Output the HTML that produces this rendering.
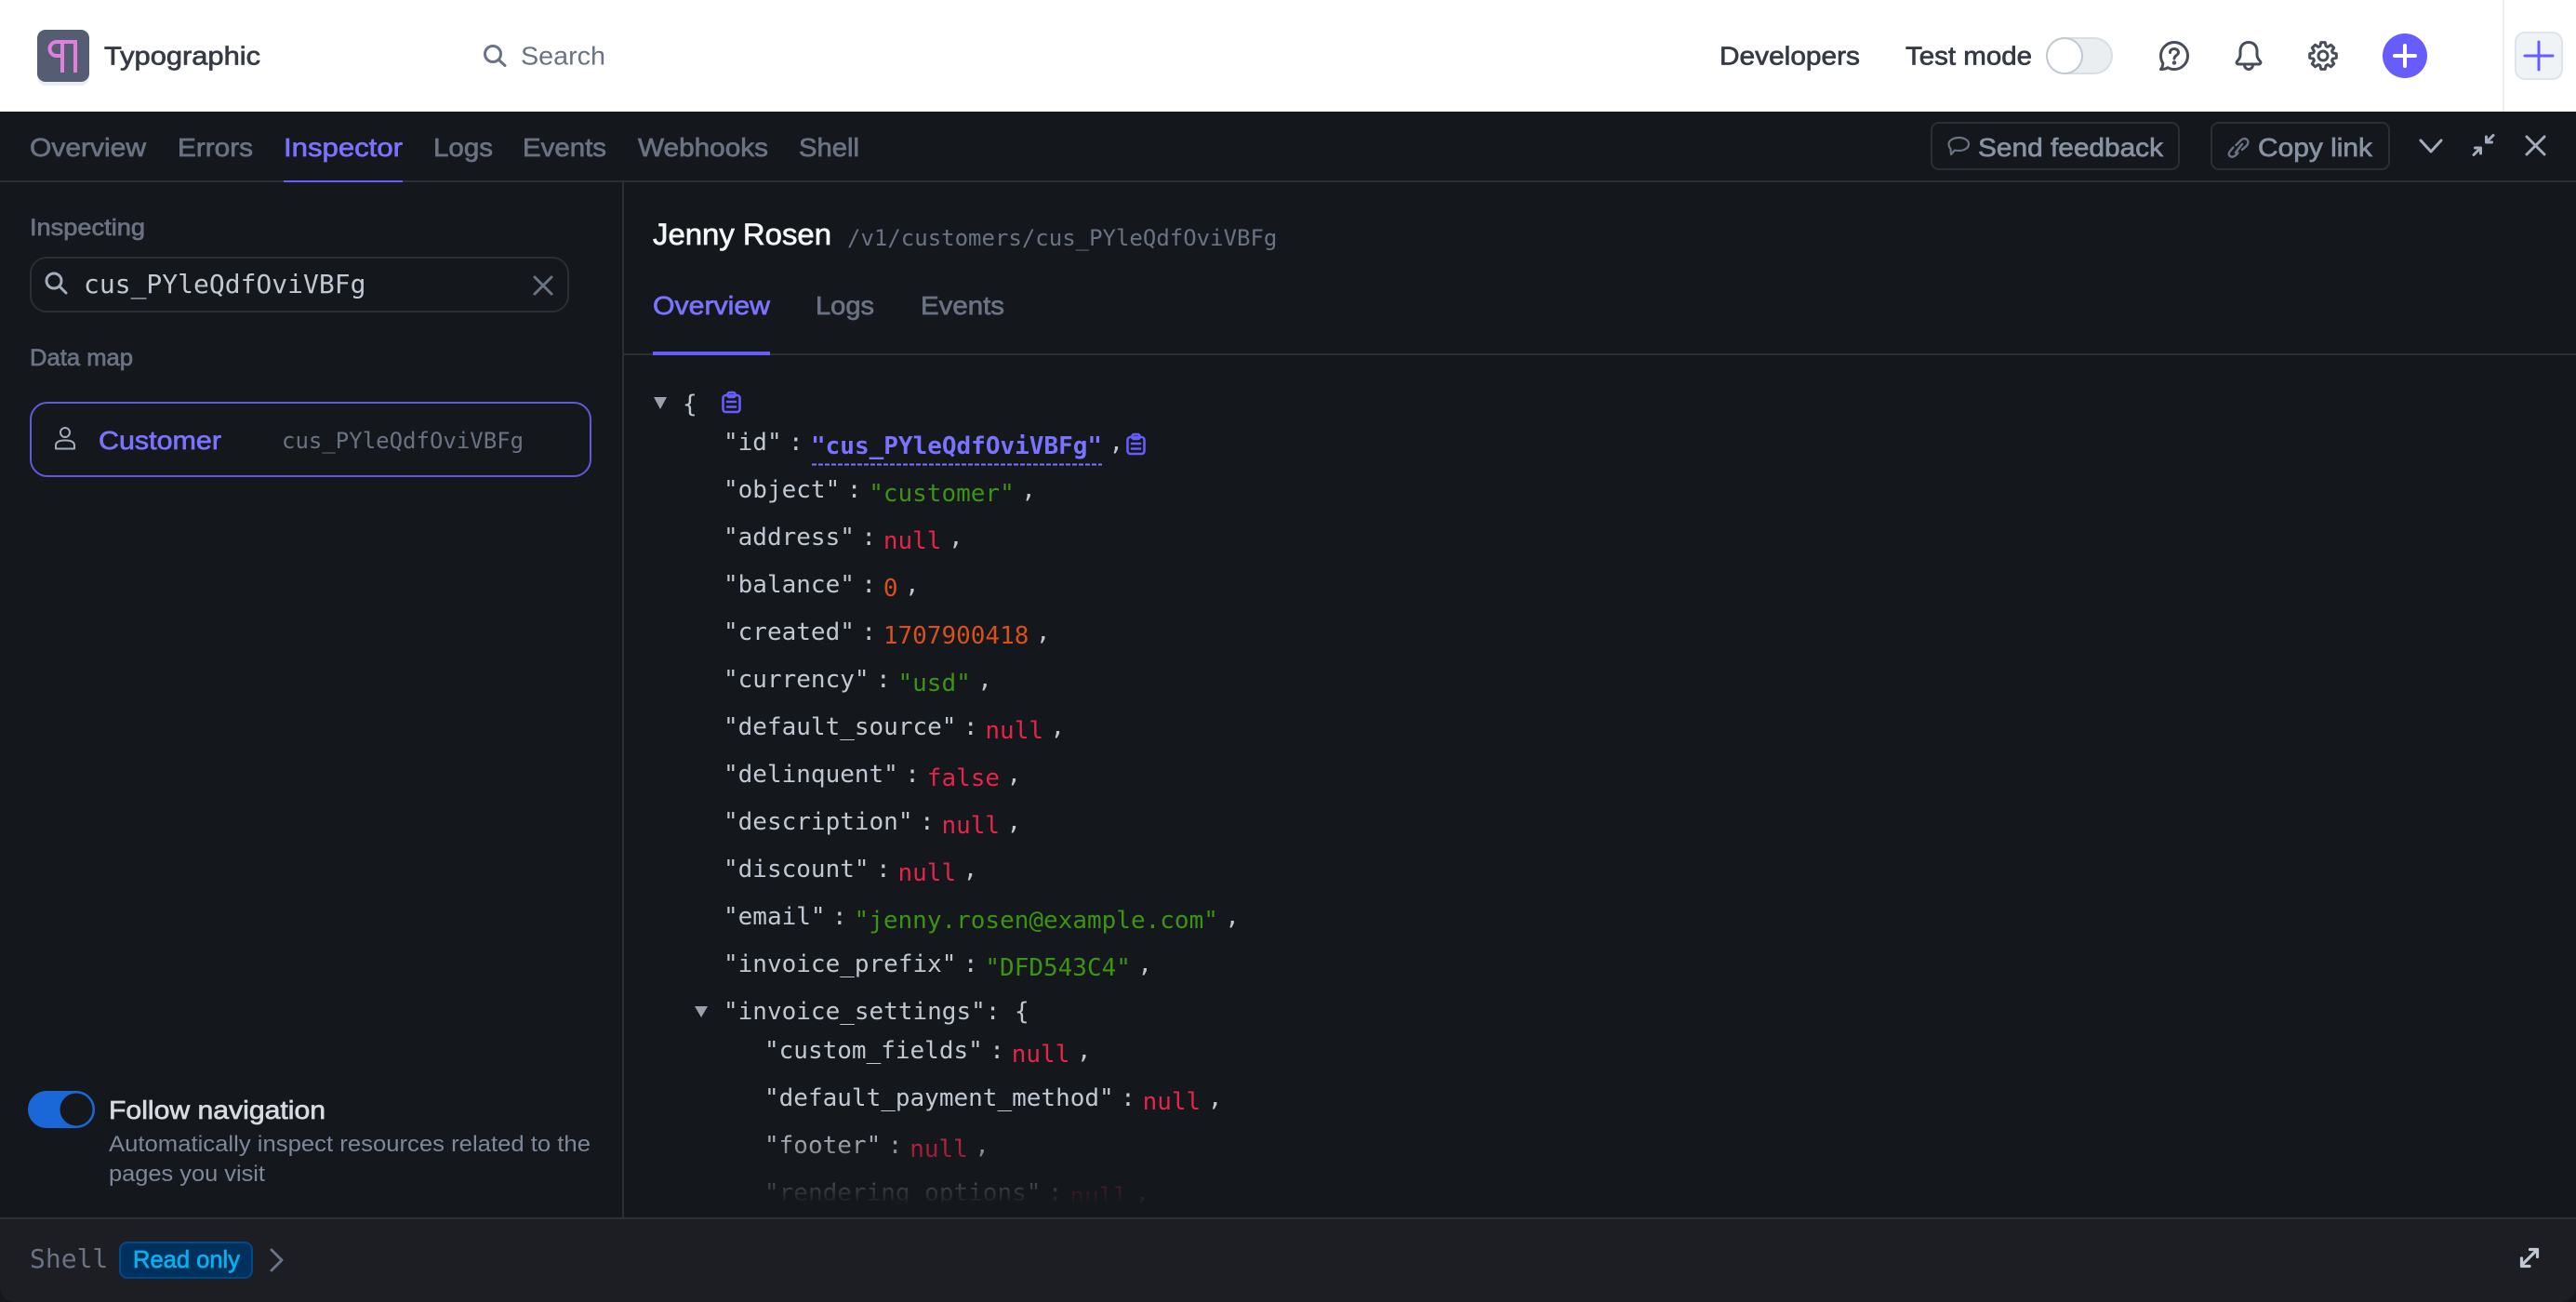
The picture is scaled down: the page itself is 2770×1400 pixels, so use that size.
<!DOCTYPE html>
<html lang="en"><head><meta charset="utf-8"><title>Typographic</title>
<style>
html,body{margin:0;padding:0;background:#14171c;width:2770px;height:1400px;overflow:hidden}
svg{display:block}
text{white-space:pre}
.s{font-family:"Liberation Sans",sans-serif;font-size:28px}
.m{stroke-width:.7px}
.c{font-family:"DejaVu Sans Mono","Liberation Mono",monospace;font-size:26px}
.k{fill:#c0c8d2}.g{fill:#3d9414}.r{fill:#e5244a}.o{fill:#d9501a}
.i{fill:none;stroke-linecap:round;stroke-linejoin:round}
</style></head><body>
<svg xmlns="http://www.w3.org/2000/svg" width="2770" height="1400" viewBox="0 0 2770 1400">
<defs><linearGradient id="fade" gradientUnits="userSpaceOnUse" x1="0" y1="1210" x2="0" y2="1296"><stop offset="0" stop-color="#14171c" stop-opacity="0"/><stop offset="1" stop-color="#14171c"/></linearGradient></defs>

<!-- top header -->
<rect x="0" y="0" width="2770" height="120" fill="#fff"/>
<rect x="40" y="36" width="56" height="56" rx="9" fill="#ebeef1"/>
<rect x="40" y="32" width="56" height="56" rx="9" fill="#545d72"/>
<path d="M67 78V45H81V78M67 45H61A7.5 7.5 0 0 0 61 60H67" fill="none" stroke="#e07fdc" stroke-width="4"/>
<text class="s m" x="112" y="69.5" textLength="168" lengthAdjust="spacingAndGlyphs" fill="#353a44" stroke="#353a44">Typographic</text>
<circle cx="530" cy="58" r="8.5" class="i" stroke="#6a7383" stroke-width="3"/><path d="M536.5 64.5L543 70.5" class="i" stroke="#6a7383" stroke-width="3"/>
<text class="s" x="560" y="69.5" textLength="91" lengthAdjust="spacingAndGlyphs" fill="#6a7383">Search</text>
<text class="s m" x="1849" y="69.5" textLength="151" lengthAdjust="spacingAndGlyphs" fill="#353a44" stroke="#353a44">Developers</text>
<text class="s m" x="2049" y="69.5" textLength="136" lengthAdjust="spacingAndGlyphs" fill="#353a44" stroke="#353a44">Test mode</text>
<rect x="2201" y="41" width="70" height="38" rx="19" fill="#ebeef1" stroke="#d8dee4" stroke-width="2"/>
<circle cx="2220" cy="60" r="19" fill="#fff" stroke="#c0c8d2" stroke-width="2"/>
<g transform="translate(2322 44)" class="i" stroke="#474e5a" stroke-width="3">
<path d="M16 1.5C24 1.5 30.5 8 30.5 16S24 30.5 16 30.5C13.5 30.5 11 29.8 9 28.6C7 30 4.5 30.5 1.5 30.5C3 28.5 3.8 26.5 3.8 24C2.3 21.7 1.5 19 1.5 16C1.5 8 8 1.5 16 1.5Z"/>
<path d="M11.5 12.5C11.5 10 13.5 8.5 16 8.5S20.5 10.2 20.5 12.5C20.5 15.5 16 15.5 16 19"/>
<circle cx="16" cy="23.5" r=".8" fill="#474e5a"/></g>
<g transform="translate(2404 44)" class="i" stroke="#474e5a" stroke-width="3">
<path d="M14 1.5C8 1.5 5 6 5 11V15C5 18 3.5 20 1.5 22C0.5 23.5 1.5 25 3 25H25C26.5 25 27.5 23.5 26.5 22C24.5 20 23 18 23 15V11C23 6 20 1.5 14 1.5Z"/>
<path d="M9.5 25.5C9.5 28.5 11.5 30.5 14 30.5S18.5 28.5 18.5 25.5"/></g>
<g transform="translate(2498 60)" class="i" stroke="#474e5a" stroke-width="3">
<polygon points="10.33,-3.16 14.32,-2.27 14.32,2.27 10.33,3.16 9.54,5.07 11.73,8.52 8.52,11.73 5.07,9.54 3.16,10.33 2.27,14.32 -2.27,14.32 -3.16,10.33 -5.07,9.54 -8.52,11.73 -11.73,8.52 -9.54,5.07 -10.33,3.16 -14.32,2.27 -14.32,-2.27 -10.33,-3.16 -9.54,-5.07 -11.73,-8.52 -8.52,-11.73 -5.07,-9.54 -3.16,-10.33 -2.27,-14.32 2.27,-14.32 3.16,-10.33 5.07,-9.54 8.52,-11.73 11.73,-8.52 9.54,-5.07"/>
<circle r="5"/></g>
<circle cx="2586" cy="60" r="24" fill="#675dff"/>
<path d="M2575 60H2597M2586 49V71" class="i" stroke="#fff" stroke-width="4"/>
<rect x="2691" y="0" width="2" height="120" fill="#ebeef1"/>
<rect x="2705" y="35" width="50" height="50" rx="10" fill="#f0f3f6" stroke="#dfe3ea" stroke-width="2"/>
<path d="M2715 60H2745M2730 45V75" class="i" stroke="#675dff" stroke-width="3"/>

<!-- dark panel tabs -->
<rect x="0" y="194" width="2770" height="2" fill="#2a2e37"/>
<rect x="305" y="194" width="128" height="2" fill="#675dff"/>
<g class="s m" fill="#6a7383" stroke="#6a7383">
<text x="32" y="168" textLength="125" lengthAdjust="spacingAndGlyphs">Overview</text>
<text x="191" y="168" textLength="81" lengthAdjust="spacingAndGlyphs">Errors</text>
<text x="466" y="168" textLength="64" lengthAdjust="spacingAndGlyphs">Logs</text>
<text x="562" y="168" textLength="90" lengthAdjust="spacingAndGlyphs">Events</text>
<text x="686" y="168" textLength="140" lengthAdjust="spacingAndGlyphs">Webhooks</text>
<text x="859" y="168" textLength="65" lengthAdjust="spacingAndGlyphs">Shell</text>
</g>
<text class="s m" x="305" y="168" textLength="128" lengthAdjust="spacingAndGlyphs" fill="#7a73ff" stroke="#7a73ff">Inspector</text>
<rect x="2077" y="132" width="266" height="50" rx="8" fill="none" stroke="#2a2e37" stroke-width="2"/>
<rect x="2378" y="132" width="191" height="50" rx="8" fill="none" stroke="#2a2e37" stroke-width="2"/>
<path d="M2106.500 148C2112.500 148 2117 151 2117 155S2112.500 162 2106.500 162C2104.500 162 2103 161.800 2102 161.500L2098 166L2097.500 160C2096 158.500 2095.500 157 2095.500 155C2095.500 151 2100.500 148 2106.500 148Z" class="i" stroke="#6a7383" stroke-width="2.200"/>
<text class="s m" x="2127" y="168" textLength="199" lengthAdjust="spacingAndGlyphs" fill="#8792a2" stroke="#8792a2">Send feedback</text>
<g class="i" stroke="#6a7383" stroke-width="2.400"><path d="M2404.500 156L2410 150.500C2412.500 148.500 2415 148.800 2416.500 150.500C2418 152.500 2417.500 155 2415.500 157L2411 161"/><path d="M2401.500 158.500L2398 162.500C2396.300 164.500 2396.300 166.500 2398 168C2400 169.300 2402 168.800 2404 167L2406.500 164.500"/><path d="M2404 164L2411 155"/></g>
<text class="s m" x="2428" y="168" textLength="123" lengthAdjust="spacingAndGlyphs" fill="#8792a2" stroke="#8792a2">Copy link</text>
<path d="M2603 151L2614 163L2625 151" class="i" stroke="#a3acba" stroke-width="3"/>
<g class="i" stroke="#a3acba" stroke-width="3"><path d="M2660 166.500L2667.500 159M2667.500 165V159H2661.500"/><path d="M2681 145.500L2673.500 153M2673.500 147V153H2679.500"/></g>
<path d="M2717 147L2736 166M2736 147L2717 166" class="i" stroke="#a3acba" stroke-width="3"/>

<!-- sidebar -->
<rect x="669" y="196" width="2" height="1114" fill="#2a2e37"/>
<text class="s m" style="font-size:25px" x="32" y="253" textLength="124" lengthAdjust="spacingAndGlyphs" fill="#6a7383" stroke="#6a7383">Inspecting</text>
<rect x="33" y="277" width="578" height="58" rx="17" fill="none" stroke="#2a2e37" stroke-width="2"/>
<circle cx="58" cy="302" r="8" class="i" stroke="#a3acba" stroke-width="3"/><path d="M64 308L71 315" class="i" stroke="#a3acba" stroke-width="3"/>
<text class="c" style="font-size:28px" x="90" y="315" fill="#c0c8d2">cus_PYleQdfOviVBFg</text>
<path d="M575 298L593 316M593 298L575 316" class="i" stroke="#6a7383" stroke-width="3"/>
<text class="s m" style="font-size:25px" x="32" y="393" textLength="111" lengthAdjust="spacingAndGlyphs" fill="#6a7383" stroke="#6a7383">Data map</text>
<rect x="33" y="433" width="602" height="79" rx="18" fill="none" stroke="#605ad8" stroke-width="2"/>
<circle cx="70" cy="465" r="5" class="i" stroke="#a3acba" stroke-width="2"/><path d="M60 482.500V479C60 475.500 63 473.500 70 473.500S80 475.500 80 479V482.500Z" class="i" stroke="#a3acba" stroke-width="2"/>
<text class="s m" x="106" y="483" textLength="132" lengthAdjust="spacingAndGlyphs" fill="#7a73ff" stroke="#7a73ff">Customer</text>
<text class="c" style="font-size:24px" x="303" y="482" fill="#6a7383">cus_PYleQdfOviVBFg</text>

<rect x="31" y="1174" width="70" height="38" rx="19" fill="#1a68d8" stroke="#1a68d8" stroke-width="2"/>
<circle cx="82" cy="1193" r="18.500" fill="#14171c" stroke="#1a68d8" stroke-width="2"/>
<text class="s m" x="117" y="1203" textLength="233" lengthAdjust="spacingAndGlyphs" fill="#d5dbe1" stroke="#d5dbe1">Follow navigation</text>
<text class="s" style="font-size:24px" x="117" y="1238" textLength="518" lengthAdjust="spacingAndGlyphs" fill="#7d8898">Automatically inspect resources related to the</text>
<text class="s" style="font-size:24px" x="117" y="1270" textLength="168" lengthAdjust="spacingAndGlyphs" fill="#7d8898">pages you visit</text>

<!-- main header -->
<text class="s m" style="font-size:32px" x="702" y="263" textLength="192" lengthAdjust="spacingAndGlyphs" fill="#f5f6f8" stroke="#f5f6f8">Jenny Rosen</text>
<text class="c" style="font-size:24px" x="911" y="264" fill="#6a7383">/v1/customers/cus_PYleQdfOviVBFg</text>
<rect x="671" y="380" width="2099" height="2" fill="#2a2e37"/>
<rect x="702" y="378" width="126" height="4" fill="#675dff"/>
<text class="s m" x="702" y="338" textLength="126" lengthAdjust="spacingAndGlyphs" fill="#7a73ff" stroke="#7a73ff">Overview</text>
<text class="s m" x="877" y="338" textLength="63" lengthAdjust="spacingAndGlyphs" fill="#6a7383" stroke="#6a7383">Logs</text>
<text class="s m" x="990" y="338" textLength="90" lengthAdjust="spacingAndGlyphs" fill="#6a7383" stroke="#6a7383">Events</text>

<!-- json -->
<path d="M703 427H717L710 440Z" fill="#9aa1ab"/>
<text class="c k" x="734" y="443">{</text>
<g class="i" stroke="#675dff" stroke-width="2.600"><rect x="777.500" y="425" width="18" height="18" rx="3"/><rect x="782.500" y="422" width="8" height="5" rx="2"/><path d="M782 432H791M782 437.500H791"/></g>

<g class="c k">
<text x="778" y="484">"id"</text><text x="848" y="484">:</text><text x="1192.500" y="484">,</text>
<text x="778" y="535">"object"</text><text x="910.700" y="535">:</text><text x="1098.200" y="535">,</text>
<text x="778" y="586">"address"</text><text x="926.350" y="586">:</text><text x="1020" y="586">,</text>
<text x="778" y="637">"balance"</text><text x="926.350" y="637">:</text><text x="973" y="637">,</text>
<text x="778" y="688">"created"</text><text x="926.350" y="688">:</text><text x="1113.850" y="688">,</text>
<text x="778" y="739">"currency"</text><text x="942" y="739">:</text><text x="1051.250" y="739">,</text>
<text x="778" y="790">"default_source"</text><text x="1035.900" y="790">:</text><text x="1129.500" y="790">,</text>
<text x="778" y="841">"delinquent"</text><text x="973.300" y="841">:</text><text x="1082.500" y="841">,</text>
<text x="778" y="892">"description"</text><text x="988.950" y="892">:</text><text x="1082.500" y="892">,</text>
<text x="778" y="943">"discount"</text><text x="942" y="943">:</text><text x="1035.600" y="943">,</text>
<text x="778" y="994">"email"</text><text x="895" y="994">:</text><text x="1317.300" y="994">,</text>
<text x="778" y="1045">"invoice_prefix"</text><text x="1035.900" y="1045">:</text><text x="1223.400" y="1045">,</text>
<text x="778" y="1096">"invoice_settings":</text><text x="1091" y="1096">{</text>
<text x="822" y="1138">"custom_fields"</text><text x="1064.250" y="1138">:</text><text x="1157.850" y="1138">,</text>
<text x="822" y="1189">"default_payment_method"</text><text x="1205.100" y="1189">:</text><text x="1298.700" y="1189">,</text>
<text x="822" y="1240">"footer"</text><text x="954.700" y="1240">:</text><text x="1048.300" y="1240">,</text>
<text x="822" y="1291">"rendering_options"</text><text x="1126.850" y="1291">:</text><text x="1220.450" y="1291">,</text>
</g>
<text class="c" style="font-weight:700" x="872" y="488" fill="#7a73ff">"cus_PYleQdfOviVBFg"</text>
<path d="M873 499.500H1185" fill="none" stroke="#7a73ff" stroke-width="2" stroke-dasharray="5 2"/>
<g class="i" stroke="#675dff" stroke-width="2.600"><rect x="1212.500" y="470" width="18" height="18" rx="3"/><rect x="1217.500" y="467" width="8" height="5" rx="2"/><path d="M1217 477H1226M1217 482.500H1226"/></g>
<g class="c">
<text class="g" x="934.200" y="539">"customer"</text>
<text class="r" x="949.850" y="590">null</text>
<text class="o" x="949.850" y="641">0</text>
<text class="o" x="949.850" y="692">1707900418</text>
<text class="g" x="965.500" y="743">"usd"</text>
<text class="r" x="1059.400" y="794">null</text>
<text class="r" x="996.800" y="845">false</text>
<text class="r" x="1012.450" y="896">null</text>
<text class="r" x="965.500" y="947">null</text>
<text class="g" x="918.550" y="998">"jenny.rosen@example.com"</text>
<text class="g" x="1059.400" y="1049">"DFD543C4"</text>
<text class="r" x="1087.750" y="1142">null</text>
<text class="r" x="1228.600" y="1193">null</text>
<text class="r" x="978.200" y="1244">null</text>
<text class="r" x="1150.350" y="1295">null</text>
</g>
<path d="M747 1082H761L754 1094Z" fill="#9aa1ab"/>
<rect x="671" y="1190" width="2099" height="120" fill="url(#fade)"/>

<!-- bottom bar -->
<path d="M0 1310H2770V1384A16 16 0 0 1 2754 1400H16A16 16 0 0 1 0 1384Z" fill="#1c1e24"/>
<rect x="0" y="1309" width="2770" height="2" fill="#2d313a"/>
<text class="c" style="font-size:28px" x="32" y="1363" fill="#6a7383">Shell</text>
<rect x="129" y="1336" width="142" height="38" rx="8" fill="#00305c" stroke="#004a8c" stroke-width="2"/>
<text class="s m" style="font-size:26px" x="143" y="1363" textLength="115" lengthAdjust="spacingAndGlyphs" fill="#06b0ee" stroke="#06b0ee">Read only</text>
<path d="M292 1344L303 1355L292 1366" class="i" stroke="#6a7383" stroke-width="3"/>
<g class="i" stroke="#c0c8d2" stroke-width="3.200"><path d="M2713 1359L2727 1345"/><path d="M2720.500 1343.500H2728.500V1351.500"/><path d="M2711.500 1353V1361.500H2720"/></g>
</svg>
</body></html>
